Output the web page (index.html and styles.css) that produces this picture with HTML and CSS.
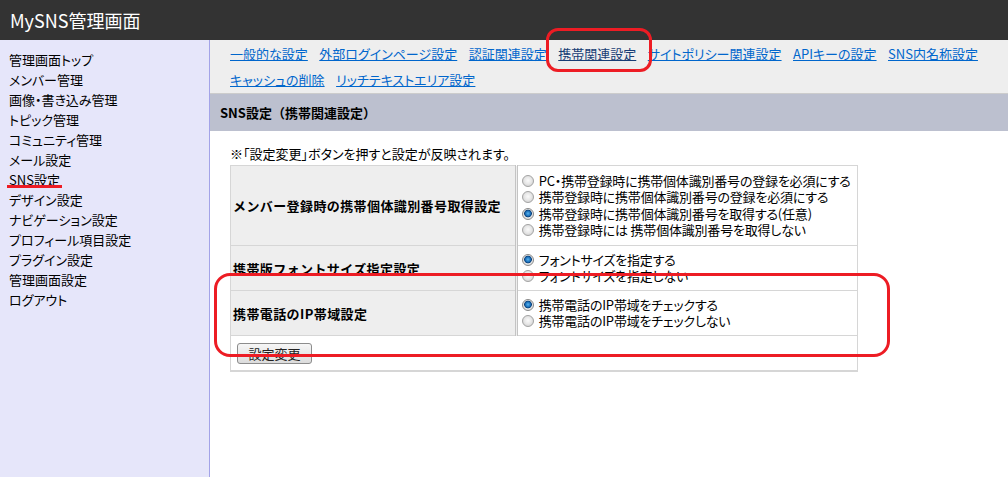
FILE: index.html
```html
<!DOCTYPE html>
<html lang="ja">
<head>
    <meta charset="UTF-8">
    <title>MySNS管理画面</title>
    <link rel="stylesheet" href="styles.css">
</head>
<body>

<div class="header">
    <h1>MySNS管理画面</h1>
</div>

<div class="layout">
    <div class="sidebar">
        <ul>
            <li><a href="#">管理画面トップ</a></li>
            <li><a href="#">メンバー管理</a></li>
            <li><a href="#">画像・書き込み管理</a></li>
            <li><a href="#">トピック管理</a></li>
            <li><a href="#">コミュニティ管理</a></li>
            <li><a href="#">メール設定</a></li>
            <li><a href="#">SNS設定</a></li>
            <li><a href="#">デザイン設定</a></li>
            <li><a href="#">ナビゲーション設定</a></li>
            <li><a href="#">プロフィール項目設定</a></li>
            <li><a href="#">プラグイン設定</a></li>
            <li><a href="#">管理画面設定</a></li>
            <li><a href="#">ログアウト</a></li>
        </ul>
    </div>

    <div class="main">
        <div class="subnav">
            <a href="#">一般的な設定</a>
            <a href="#">外部ログインページ設定</a>
            <a href="#">認証関連設定</a>
            <a href="#" class="current">携帯関連設定</a>
            <a href="#">サイトポリシー関連設定</a>
            <a href="#">APIキーの設定</a>
            <a href="#">SNS内名称設定</a>
            <a href="#">キャッシュの削除</a>
            <a href="#">リッチテキストエリア設定</a>
        </div>

        <h2 class="page-title">SNS設定（携帯関連設定）</h2>

        <div class="content">
            <p class="note">※「設定変更」ボタンを押すと設定が反映されます。</p>
            <form>
                <table class="settings">
                    <tr class="row-four">
                        <th>メンバー登録時の携帯個体識別番号取得設定</th>
                        <td>
                            <label><input type="radio" name="uid"> PC・携帯登録時に携帯個体識別番号の登録を必須にする</label>
                            <label><input type="radio" name="uid"> 携帯登録時に携帯個体識別番号の登録を必須にする</label>
                            <label><input type="radio" name="uid" checked> 携帯登録時に携帯個体識別番号を取得する(任意)</label>
                            <label><input type="radio" name="uid"> 携帯登録時には 携帯個体識別番号を取得しない</label>
                        </td>
                    </tr>
                    <tr class="row-two">
                        <th>携帯版フォントサイズ指定設定</th>
                        <td>
                            <label><input type="radio" name="font" checked> フォントサイズを指定する</label>
                            <label><input type="radio" name="font"> フォントサイズを指定しない</label>
                        </td>
                    </tr>
                    <tr class="row-two">
                        <th>携帯電話のIP帯域設定</th>
                        <td>
                            <label><input type="radio" name="ip" checked> 携帯電話のIP帯域をチェックする</label>
                            <label><input type="radio" name="ip"> 携帯電話のIP帯域をチェックしない</label>
                        </td>
                    </tr>
                    <tr>
                        <td colspan="2" class="submit-cell"><button type="button" class="btn">設定変更</button></td>
                    </tr>
                </table>
            </form>
        </div>
    </div>
</div>

<!-- red marks drawn over the screenshot -->
<div class="mark mark-tab"></div>
<div class="mark mark-side"></div>
<div class="mark mark-row"></div>

</body>
</html>
```

FILE: styles.css
```css
body {
    margin: 0;
    padding: 0;
    font-family: "Noto Sans CJK JP", "Liberation Sans", sans-serif;
    font-size: 13px;
    color: #000;
    background: #fff;
    height: 477px;
    overflow: hidden;
    font-feature-settings: "palt";
}

.header {
    background-color: #333;
    height: 40px;
}

.header h1 {
    margin: 0;
    padding-left: 10px;
    color: #fff;
    font-size: 18px;
    font-weight: normal;
    line-height: 40px;
}

.layout {
    display: flex;
    height: 437px;
}

.sidebar {
    width: 209px;
    background-color: #e6e6fa;
    border-right: 1px solid #a3a3e8;
    padding-top: 10px;
}

.sidebar ul {
    list-style: none;
    margin: 0;
    padding: 0 0 0 9px;
}

.sidebar li {
    line-height: 20px;
}

.sidebar a {
    color: #000;
    text-decoration: none;
}

.main {
    flex: 1;
}

.subnav {
    display: flex;
    flex-wrap: wrap;
    align-content: flex-start;
    column-gap: 11.5px;
    background-color: #eee;
    border-bottom: 1px solid #ccc;
    padding: 1px 10px 0 20px;
    line-height: 26px;
    height: 52px;
}

.subnav a {
    color: #0066cc;
    white-space: nowrap;
}

.subnav a.current {
    color: #173d75;
}

.page-title {
    margin: 0;
    background-color: #bcc0cf;
    font-size: 13px;
    line-height: 37px;
    padding: 0 10px;
    font-feature-settings: normal;
}

.content {
    padding: 15px 20px;
}

.note {
    margin: 0 0 3px;
    line-height: 16px;
}

.settings {
    width: 628px;
    table-layout: fixed;
    border-collapse: collapse;
    border: 1px solid #d6d6d6;
    border-bottom-width: 2px;
}

.settings th {
    width: 280px;
    background-color: #eee;
    border: 1px solid #d6d6d6;
    border-right: 3px double #c4c4c4;
    text-align: left;
    padding: 0 2px;
    font-feature-settings: normal;
    letter-spacing: 0.4px;
    white-space: nowrap;
}

.settings td {
    border: 1px solid #d6d6d6;
    padding: 0 4px;
    line-height: 16.5px;
    white-space: nowrap;
    letter-spacing: -0.2px;
}

.settings .row-four td,
.settings .row-four th {
    height: 79px;
}

.settings .row-two td,
.settings .row-two th {
    height: 44px;
}

.settings label {
    display: block;
}

.settings input[type="radio"] {
    appearance: none;
    -webkit-appearance: none;
    width: 12px;
    height: 12px;
    margin: 0 2px 0 0;
    vertical-align: -1px;
    border-radius: 50%;
    border: 1px solid #a4a4a4;
    background: radial-gradient(circle at 50% 45%, #fafafa 0, #e8e8e8 45%, #c8c8c8 100%);
}

.settings input[type="radio"]:checked {
    border-color: #8a8a8a;
    background: radial-gradient(circle at 50% 45%, #5ab4f0 0, #1a6fb8 2.5px, #0c3f78 3.5px, #e8e8e8 4.2px, #cfcfcf 100%);
}

.settings .submit-cell {
    height: 34px;
    padding: 0 6px;
}

.btn {
    font-family: inherit;
    font-size: 13px;
    color: #222;
    width: 75px;
    height: 21px;
    padding: 0;
    border: 1px solid #8c8c8c;
    border-radius: 3px;
    background: linear-gradient(#f6f6f6, #dcdcdc);
}

.mark {
    position: absolute;
    border: 3px solid #ed1c24;
    box-sizing: border-box;
    pointer-events: none;
}

.mark-tab {
    left: 546px;
    top: 28px;
    width: 106px;
    height: 44px;
    border-radius: 12px;
}

.mark-side {
    left: 7px;
    top: 185px;
    width: 55px;
    height: 3px;
    border-width: 3px 0 0 0;
}

.mark-row {
    left: 214px;
    top: 273px;
    width: 676px;
    height: 84px;
    border-radius: 16px;
}
```
